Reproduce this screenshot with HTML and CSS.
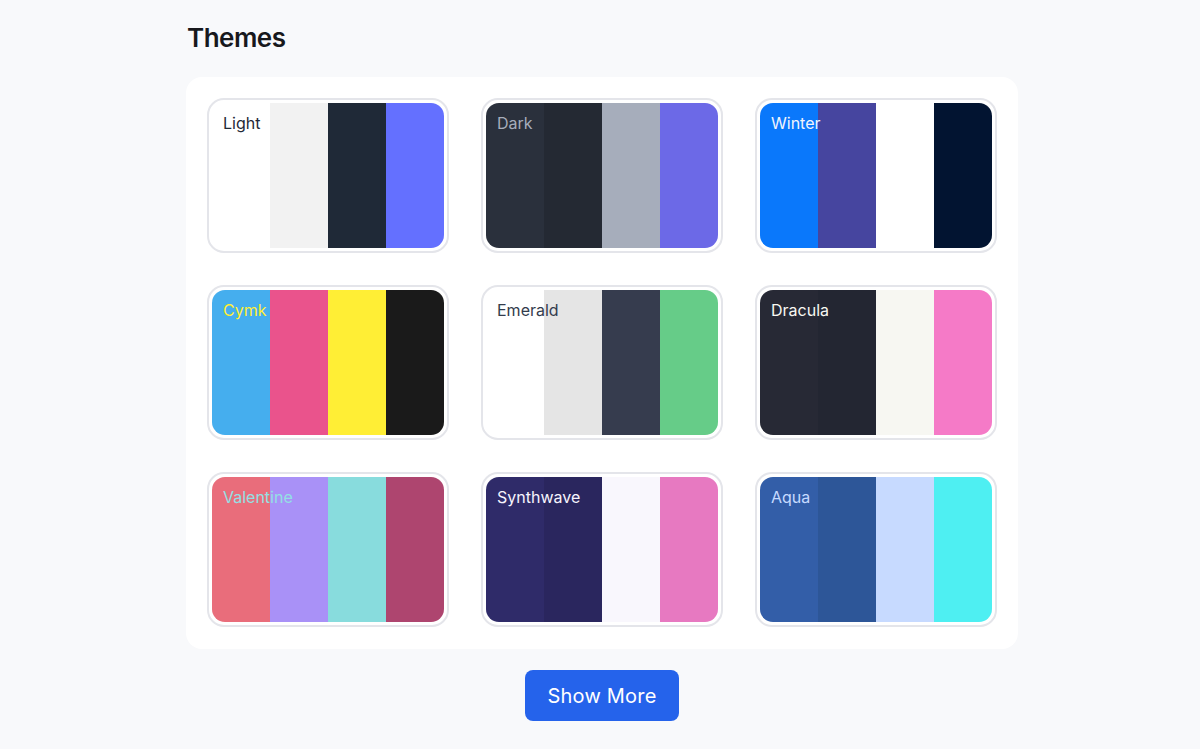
FILE: index.html
```html
<!DOCTYPE html>
<html lang="en">
<head>
<meta charset="utf-8">
<title>Themes</title>
<link rel="stylesheet" href="styles.css">
</head>
<body>
<main class="page">
  <h1 class="title">Themes</h1>
  <section class="panel">
    <div class="card"><div class="swatch"><span class="name" style="color:#1f2937">Light</span><i style="background:#ffffff"></i><i style="background:#f2f2f2"></i><i style="background:#1f2937"></i><i style="background:#6470ff"></i></div></div>
    <div class="card"><div class="swatch"><span class="name" style="color:#a6adbb">Dark</span><i style="background:#2a303c"></i><i style="background:#242933"></i><i style="background:#a6adbb"></i><i style="background:#6c69e7"></i></div></div>
    <div class="card"><div class="swatch"><span class="name" style="color:#f2f4fb">Winter</span><i style="background:#0a78fb"></i><i style="background:#46459f"></i><i style="background:#ffffff"></i><i style="background:#021431"></i></div></div>
    <div class="card"><div class="swatch"><span class="name" style="color:#ffee34">Cymk</span><i style="background:#45aeee"></i><i style="background:#ea538c"></i><i style="background:#ffee35"></i><i style="background:#1a1a1a"></i></div></div>
    <div class="card"><div class="swatch"><span class="name" style="color:#333c4d">Emerald</span><i style="background:#ffffff"></i><i style="background:#e5e5e5"></i><i style="background:#363c4e"></i><i style="background:#66cc88"></i></div></div>
    <div class="card"><div class="swatch"><span class="name" style="color:#f8f8f2">Dracula</span><i style="background:#272935"></i><i style="background:#232632"></i><i style="background:#f7f7f2"></i><i style="background:#f57ac7"></i></div></div>
    <div class="card"><div class="swatch"><span class="name" style="color:#93e0e4">Valentine</span><i style="background:#e96d7b"></i><i style="background:#a991f7"></i><i style="background:#88dcdd"></i><i style="background:#ae456f"></i></div></div>
    <div class="card"><div class="swatch"><span class="name" style="color:#f6f4fd">Synthwave</span><i style="background:#2f2b69"></i><i style="background:#2a265e"></i><i style="background:#f9f7fd"></i><i style="background:#e779c1"></i></div></div>
    <div class="card"><div class="swatch"><span class="name" style="color:#c6daff">Aqua</span><i style="background:#335ea8"></i><i style="background:#2d5698"></i><i style="background:#c7daff"></i><i style="background:#4eeff2"></i></div></div>
  </section>
  <div class="actions"><button class="more" type="button">Show More</button></div>
</main>
</body>
</html>
```
FILE: styles.css
```css
* { box-sizing: border-box; }
html, body { margin: 0; padding: 0; }
body {
  background: #f8f9fb;
  font-family: Inter, "Noto Sans", "Liberation Sans", sans-serif;
  color: #111827;
}
.page {
  width: 832px;
  margin: 0 0 0 186px;
  padding-top: 22px;
}
.title {
  margin: 0 0 0 1px;
  font-size: 26px;
  line-height: 32px;
  font-weight: 600;
  letter-spacing: -0.5px;
  color: #17181c;
}
.panel {
  margin-top: 23px;
  background: #ffffff;
  border-radius: 16px;
  padding: 21px 21px 22px;
  display: grid;
  grid-template-columns: repeat(3, 242px);
  column-gap: 32px;
  row-gap: 32px;
}
.card {
  width: 242px;
  height: 155px;
  border: 2px solid #e4e5ea;
  border-radius: 17px;
  padding: 3px;
  background: #ffffff;
}
.swatch {
  position: relative;
  display: grid;
  grid-template-columns: repeat(4, 1fr);
  height: 100%;
  border-radius: 13px;
  overflow: hidden;
}
.swatch i { display: block; }
.name {
  position: absolute;
  top: 8px;
  left: 11px;
  font-size: 16px;
  line-height: 24px;
  font-weight: 400;
}
.actions {
  display: flex;
  justify-content: center;
  margin-top: 21px;
}
.more {
  width: 154px;
  height: 51px;
  border: none;
  border-radius: 8px;
  background: #2563eb;
  color: #ffffff;
  font-family: Inter, "Noto Sans", "Liberation Sans", sans-serif;
  font-size: 20px;
  font-weight: 400;
  letter-spacing: 0.2px;
  cursor: pointer;
}
```
